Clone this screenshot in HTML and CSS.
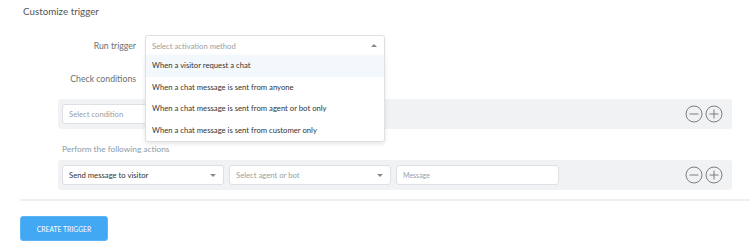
FILE: index.html
```html
<!DOCTYPE html>
<html lang="en">
<head>
  <meta charset="UTF-8" />
  <title>Customize trigger</title>
  <link rel="stylesheet" href="styles.css">
</head>
<body>
  <div class="page">
    <h2 class="title">Customize trigger</h2>

    <div class="field">
      <label class="field-label">Run trigger</label>
      <div class="select-wrap">
        <div class="select open">
          <span class="placeholder">Select activation method</span>
          <span class="caret up"></span>
        </div>
        <ul class="menu">
          <li class="active">When a visitor request a chat</li>
          <li>When a chat message is sent from anyone</li>
          <li>When a chat message is sent from agent or bot only</li>
          <li>When a chat message is sent from customer only</li>
        </ul>
      </div>
    </div>

    <div class="field check">
      <label class="field-label">Check conditions</label>
    </div>

    <div class="rule-row">
      <div class="input cond"><span class="placeholder">Select condition</span></div>
      <div class="row-actions">
        <svg class="ctl" viewBox="0 0 18 18"><circle cx="9" cy="9" r="8" /><path d="M4.5 9h9" /></svg>
        <svg class="ctl" viewBox="0 0 18 18"><circle cx="9" cy="9" r="8" /><path d="M4.5 9h9M9 4.5v9" /></svg>
      </div>
    </div>

    <div class="section-label">Perform the following actions</div>

    <div class="rule-row">
      <div class="select small">
        <span class="value">Send message to visitor</span>
        <span class="caret"></span>
      </div>
      <div class="select small">
        <span class="placeholder">Select agent or bot</span>
        <span class="caret"></span>
      </div>
      <div class="input msg"><span class="placeholder tiny">Message</span></div>
      <div class="row-actions">
        <svg class="ctl" viewBox="0 0 18 18"><circle cx="9" cy="9" r="8" /><path d="M4.5 9h9" /></svg>
        <svg class="ctl" viewBox="0 0 18 18"><circle cx="9" cy="9" r="8" /><path d="M4.5 9h9M9 4.5v9" /></svg>
      </div>
    </div>

    <hr class="divider">

    <button class="btn-primary">CREATE TRIGGER</button>
  </div>
</body>
</html>
```

FILE: styles.css
```css
body {
  margin: 0;
  font-family: 'Lato', 'Open Sans', sans-serif;
  background: #fff;
  color: #333;
}
.page {
  padding: 0 0 0 20px;
}
.title {
  margin: 0;
  padding: 5px 0 0 3px;
  height: 21px;
  font-size: 9.8px;
  font-weight: 400;
  color: #555;
}
.field {
  display: flex;
  align-items: center;
  gap: 9px;
  margin-top: 9px;
}
.field-label {
  width: 116px;
  text-align: right;
  font-size: 8.7px;
  color: #6b6f73;
}
.field.check {
  margin-top: 16px;
  height: 12px;
}
.select-wrap {
  position: relative;
  width: 240px;
}
.select {
  box-sizing: border-box;
  height: 21px;
  display: flex;
  align-items: center;
  justify-content: space-between;
  padding: 0 7px 0 6px;
  background: #fff;
  border: 1px solid #dde0e4;
  border-radius: 3px;
  font-size: 7.7px;
}
.select.open {
  border-radius: 3px 3px 0 0;
  box-shadow: 0 1px 3px rgba(0, 0, 0, 0.08);
}
.placeholder {
  color: #9a9ea3;
}
.placeholder.tiny {
  font-size: 7px;
}
.value {
  color: #333;
}
.caret {
  width: 0;
  height: 0;
  border-left: 3px solid transparent;
  border-right: 3px solid transparent;
  border-top: 3px solid #888;
}
.caret.up {
  border-top: none;
  border-bottom: 3px solid #888;
}
.menu {
  position: absolute;
  top: 20px;
  left: 0;
  right: 0;
  margin: 0;
  padding: 0;
  list-style: none;
  background: #fff;
  border: 1px solid #dde0e4;
  border-top: none;
  border-radius: 0 0 3px 3px;
  box-shadow: 0 2px 4px rgba(0, 0, 0, 0.1);
  z-index: 5;
}
.menu li {
  height: 21.5px;
  line-height: 21.5px;
  padding-left: 6px;
  font-size: 7.7px;
  color: #333;
}
.menu li.active {
  background: #f2f8fc;
}
.rule-row {
  box-sizing: border-box;
  display: flex;
  align-items: center;
  gap: 5px;
  margin: 15px 18px 0 38px;
  height: 30px;
  padding: 0 4px;
  background: #f1f2f4;
  border-radius: 3px;
}
.input {
  box-sizing: border-box;
  height: 20px;
  display: flex;
  align-items: center;
  padding: 0 6px;
  background: #fff;
  border: 1px solid #dde0e4;
  border-radius: 3px;
  font-size: 7.7px;
}
.input.cond {
  width: 100px;
}
.select.small {
  width: 162px;
  height: 20px;
}
.input.msg {
  width: 163px;
}
.row-actions {
  margin-left: auto;
  margin-right: 5px;
  display: flex;
  gap: 2px;
}
.ctl {
  width: 18px;
  height: 18px;
  fill: none;
  stroke: #7b7e82;
  stroke-width: 1;
}
.section-label {
  margin: 15px 0 0 42px;
  height: 11px;
  line-height: 11px;
  font-size: 8.3px;
  color: #8a9ba6;
}
.section-label + .rule-row {
  margin-top: 5px;
}
.divider {
  margin: 9px 0 0 0;
  border: none;
  border-top: 2px solid #eeeff1;
}
.btn-primary {
  margin-top: 15px;
  width: 88px;
  height: 25px;
  padding: 0;
  background: #42a8f4;
  color: #fff;
  border: 1px solid #5bb4f6;
  border-radius: 3px;
  font-family: inherit;
  font-size: 6.8px;
  cursor: pointer;
}
```
